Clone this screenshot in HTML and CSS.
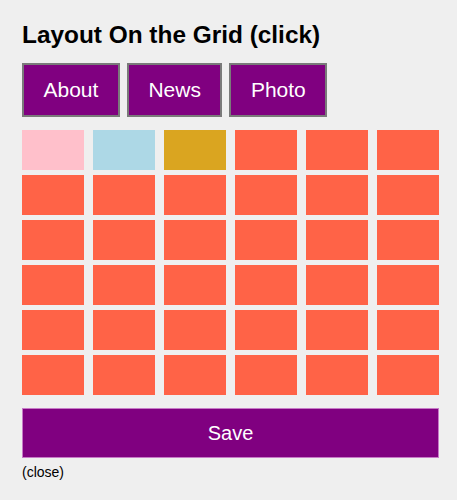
FILE: index.html
```html
<!DOCTYPE html>
<html>
<head>
<meta charset="utf-8">
<link rel="stylesheet" href="styles.css">
</head>
<body>
<div class="page">
  <h2 class="title">Layout On the Grid (click)</h2>
  <div class="tabs">
    <button class="tab">About</button>
    <button class="tab">News</button>
    <button class="tab">Photo</button>
  </div>
  <div class="grid">
    <div class="cell pink"></div>
    <div class="cell blue"></div>
    <div class="cell gold"></div>
    <div class="cell"></div><div class="cell"></div><div class="cell"></div>
    <div class="cell"></div><div class="cell"></div><div class="cell"></div><div class="cell"></div><div class="cell"></div><div class="cell"></div>
    <div class="cell"></div><div class="cell"></div><div class="cell"></div><div class="cell"></div><div class="cell"></div><div class="cell"></div>
    <div class="cell"></div><div class="cell"></div><div class="cell"></div><div class="cell"></div><div class="cell"></div><div class="cell"></div>
    <div class="cell"></div><div class="cell"></div><div class="cell"></div><div class="cell"></div><div class="cell"></div><div class="cell"></div>
    <div class="cell"></div><div class="cell"></div><div class="cell"></div><div class="cell"></div><div class="cell"></div><div class="cell"></div>
  </div>
  <button class="save">Save</button>
  <div class="close">(close)</div>
</div>
</body>
</html>
```
FILE: styles.css
```css
html, body {
  margin: 0;
  padding: 0;
  background: #efefef;
}
body {
  font-family: "Liberation Sans", Arial, sans-serif;
  color: #000;
}
.page {
  width: 417px;
  padding: 21px 0 0 22px;
}
.title {
  margin: 0;
  font-size: 24.4px;
  font-weight: bold;
  line-height: 27px;
}
.tabs {
  display: flex;
  gap: 7px;
  margin-top: 15px;
}
.tab {
  font-family: "Liberation Sans", Arial, sans-serif;
  font-size: 21px;
  line-height: 24px;
  color: #fff;
  background: #800080;
  border: 2px solid #7a7a7a;
  padding: 13px 19.5px;
  margin: 0;
}
.grid {
  display: grid;
  grid-template-columns: repeat(6, 62px);
  grid-auto-rows: 40px;
  column-gap: 9px;
  row-gap: 5px;
  margin-top: 13px;
}
.cell {
  background: #ff6347;
}
.cell.pink { background: #ffc0cb; }
.cell.blue { background: #add8e6; }
.cell.gold { background: #daa520; }
.save {
  display: block;
  width: 417px;
  height: 50px;
  margin-top: 13px;
  background: #800080;
  border: 1px solid #c77ac7;
  color: #fff;
  font-family: "Liberation Sans", Arial, sans-serif;
  font-size: 20px;
  padding: 0;
}
.close {
  font-size: 14px;
  line-height: 16px;
  margin-top: 6px;
}
```
